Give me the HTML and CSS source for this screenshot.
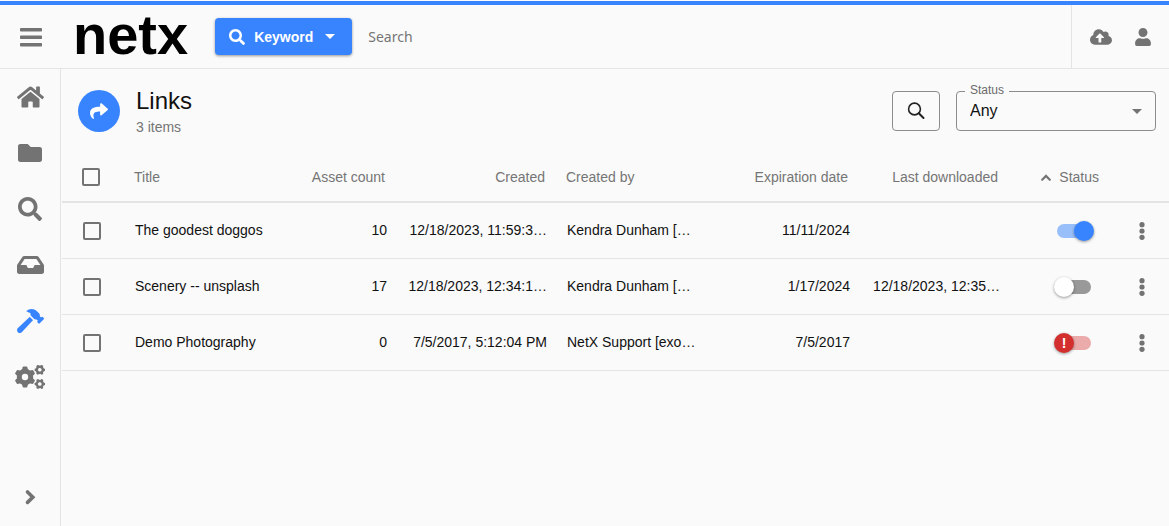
FILE: index.html
```html
<!DOCTYPE html>
<html lang="en">
<head>
  <meta charset="UTF-8">
  <meta name="viewport" content="width=device-width, initial-scale=1.0">
  <title>Links - NetX</title>
  <link rel="stylesheet" href="styles.css">
</head>
<body>
  <!-- Shared icons -->
  <svg class="sprite" aria-hidden="true">
    <symbol id="icon-search" viewBox="0 0 512 512">
      <path d="M505 442.7L405.3 343c-4.5-4.5-10.6-7-17-7H372c27.6-35.3 44-79.7 44-128C416 93.1 322.9 0 208 0S0 93.1 0 208s93.1 208 208 208c48.3 0 92.7-16.4 128-44v16.3c0 6.4 2.5 12.5 7 17l99.7 99.7c9.4 9.4 24.6 9.4 33.9 0l28.3-28.3c9.4-9.4 9.4-24.6.1-34zM208 336c-70.7 0-128-57.2-128-128 0-70.7 57.2-128 128-128 70.7 0 128 57.2 128 128 0 70.7-57.2 128-128 128z"/>
    </symbol>
    <symbol id="icon-more" viewBox="0 0 6 18">
      <circle cx="3" cy="2.7" r="2.6"/>
      <circle cx="3" cy="9" r="2.6"/>
      <circle cx="3" cy="15.3" r="2.6"/>
    </symbol>
    <symbol id="icon-caret" viewBox="0 0 10 5">
      <path d="M0 0h10L5 5z"/>
    </symbol>
  </svg>

  <header class="topbar">
    <button class="icon-button menu-button" type="button" aria-label="Menu">
      <svg width="22" height="20" viewBox="0 0 22 20">
        <rect x="0" y="1" width="22" height="3.5" rx="0.8"/>
        <rect x="0" y="8.5" width="22" height="3.5" rx="0.8"/>
        <rect x="0" y="16" width="22" height="3.5" rx="0.8"/>
      </svg>
    </button>
    <a class="logo" href="#">netx</a>
    <button class="keyword-button" type="button">
      <svg width="16" height="16"><use href="#icon-search"/></svg>
      <span>Keyword</span>
      <svg width="10" height="5"><use href="#icon-caret"/></svg>
    </button>
    <input class="search-input" type="search" placeholder="Search" aria-label="Search">
    <div class="user-tools">
      <button class="icon-button" type="button" aria-label="Upload">
        <svg width="22" height="18" viewBox="0 0 640 512">
          <path d="M537.6 226.6c4.1-10.7 6.4-22.4 6.4-34.6 0-53-43-96-96-96-19.7 0-38.1 6-53.3 16.2C367 64.2 315.3 32 256 32c-88.4 0-160 71.6-160 160 0 2.7.1 5.4.2 8.1C40.2 219.8 0 273.2 0 336c0 79.5 64.5 144 144 144h368c70.7 0 128-57.3 128-128 0-61.9-44-113.6-102.4-125.4zM393.4 288H328v112c0 8.8-7.2 16-16 16h-48c-8.8 0-16-7.2-16-16V288h-65.4c-14.3 0-21.4-17.2-11.3-27.3l105.4-105.4c6.2-6.2 16.4-6.2 22.6 0l105.4 105.4c10.1 10.1 2.9 27.3-11.3 27.3z"/>
        </svg>
      </button>
      <button class="icon-button" type="button" aria-label="Account">
        <svg width="16" height="18" viewBox="0 0 448 512">
          <path d="M224 256c70.7 0 128-57.3 128-128S294.7 0 224 0 96 57.3 96 128s57.3 128 128 128zm89.6 32h-16.7c-22.2 10.2-46.9 16-72.9 16s-50.6-5.8-72.9-16h-16.7C60.2 288 0 348.2 0 422.4V464c0 26.5 21.5 48 48 48h352c26.5 0 48-21.5 48-48v-41.6c0-74.2-60.2-134.4-134.4-134.4z"/>
        </svg>
      </button>
    </div>
  </header>

  <div class="layout">
    <nav class="sidebar" aria-label="Main">
      <a href="#" aria-label="Home">
        <svg width="27" height="24" viewBox="0 0 576 512">
          <path d="M280.37 148.26L96 300.11V464a16 16 0 0 0 16 16l112.06-.29a16 16 0 0 0 15.92-16V368a16 16 0 0 1 16-16h64a16 16 0 0 1 16 16v95.64a16 16 0 0 0 16 16.05L464 480a16 16 0 0 0 16-16V300L295.67 148.26a12.19 12.19 0 0 0-15.3 0zM571.6 251.47L488 182.56V44.05a12 12 0 0 0-12-12h-56a12 12 0 0 0-12 12v72.61L318.47 43a48 48 0 0 0-61 0L4.34 251.47a12 12 0 0 0-1.6 16.9l25.5 31A12 12 0 0 0 45.15 301l235.22-193.74a12.19 12.19 0 0 1 15.3 0L530.9 301a12 12 0 0 0 16.9-1.6l25.5-31a12 12 0 0 0-1.7-16.93z"/>
        </svg>
      </a>
      <a href="#" aria-label="Folders">
        <svg width="24" height="24" viewBox="0 0 512 512">
          <path d="M464 128H272l-64-64H48C21.49 64 0 85.49 0 112v288c0 26.51 21.49 48 48 48h416c26.51 0 48-21.49 48-48V176c0-26.51-21.49-48-48-48z"/>
        </svg>
      </a>
      <a href="#" aria-label="Search">
        <svg width="24" height="24"><use href="#icon-search"/></svg>
      </a>
      <a href="#" aria-label="Inbox">
        <svg width="27" height="24" viewBox="0 0 576 512">
          <path d="M567.938 243.908L462.25 85.374A48.003 48.003 0 0 0 422.311 64H153.689a48 48 0 0 0-39.938 21.374L8.062 243.908A47.994 47.994 0 0 0 0 270.533V400c0 26.51 21.49 48 48 48h480c26.51 0 48-21.49 48-48V270.533a47.994 47.994 0 0 0-8.062-26.625zM162.252 128h251.497l85.333 128H376l-32 64H232l-32-64H76.918l85.334-128z"/>
        </svg>
      </a>
      <a class="active" href="#" aria-label="Tools" aria-current="page">
        <svg width="27" height="24" viewBox="0 0 576 512">
          <path d="M571.31 193.94l-22.63-22.63c-6.25-6.25-16.38-6.25-22.63 0l-11.31 11.31-28.9-28.9c5.63-21.31.36-44.9-16.35-61.61l-45.25-45.25c-62.48-62.48-163.79-62.48-226.28 0l90.51 45.25v18.75c0 16.97 6.74 33.25 18.75 45.25l49.14 49.14c16.71 16.71 40.3 21.98 61.61 16.35l28.9 28.9-11.31 11.31c-6.25 6.25-6.25 16.38 0 22.63l22.63 22.63c6.25 6.25 16.38 6.25 22.63 0l90.51-90.51c6.23-6.24 6.23-16.37-.02-22.62zm-286.72-15.2c-3.7-3.7-6.84-7.79-9.85-11.95L19.64 404.96c-25.57 23.88-26.26 64.19-1.53 88.93s65.05 24.05 88.92-1.53l238.13-255.07c-3.96-2.91-7.9-5.87-11.44-9.41l-49.13-49.14z"/>
        </svg>
      </a>
      <a href="#" aria-label="Settings">
        <svg width="30" height="24" viewBox="0 0 30 24">
          <g transform="translate(10 12)">
            <circle r="5.7" fill="none" stroke="currentColor" stroke-width="5"/>
            <g id="teeth">
              <path id="tooth" d="M-3.2-6.8l.9-3q.2-.6.8-.6h3q.6 0 .8.6l.9 3z"/>
              <use href="#tooth" transform="rotate(60)"/>
              <use href="#tooth" transform="rotate(120)"/>
              <use href="#tooth" transform="rotate(180)"/>
              <use href="#tooth" transform="rotate(240)"/>
              <use href="#tooth" transform="rotate(300)"/>
            </g>
          </g>
          <g transform="translate(24.8 4.8) rotate(30) scale(0.5)">
            <circle r="6" fill="none" stroke="currentColor" stroke-width="4.8"/>
            <use href="#teeth"/>
          </g>
          <g transform="translate(24.8 19) rotate(30) scale(0.5)">
            <circle r="6" fill="none" stroke="currentColor" stroke-width="4.8"/>
            <use href="#teeth"/>
          </g>
        </svg>
      </a>
      <button class="icon-button expand-button" type="button" aria-label="Expand sidebar">
        <svg width="12" height="18" viewBox="0 0 12 18">
          <path d="M3.5 3L8.800 8.200l-5.300 5.200" fill="none" stroke="currentColor" stroke-width="3.6" stroke-linecap="round"/>
        </svg>
      </button>
    </nav>

    <main class="content">
      <div class="page-header">
        <span class="page-icon">
          <svg width="18" height="18" viewBox="0 0 512 512">
            <path d="M503.691 189.836L327.687 37.851C312.281 24.546 288 35.347 288 56.015v80.053C127.371 137.907 0 170.1 0 322.326c0 61.441 39.581 122.309 83.333 154.132 13.653 9.931 33.111-2.533 28.077-18.631C66.066 312.814 132.917 274.316 288 272.085V360c0 20.7 24.3 31.453 39.687 18.164l176.004-152c11.071-9.562 11.086-26.753 0-36.328z"/>
          </svg>
        </span>
        <div class="page-title">
          <h1>Links</h1>
          <p>3 items</p>
        </div>
        <button class="filter-search" type="button" aria-label="Search links">
          <svg width="18" height="18" viewBox="0 0 18 18">
            <circle cx="7.5" cy="7" r="5.9" fill="none" stroke="currentColor" stroke-width="1.6"/>
            <path d="M11.8 11.3l4.7 4.7" fill="none" stroke="currentColor" stroke-width="2" stroke-linecap="round"/>
          </svg>
        </button>
        <div class="select-field">
          <label for="status-filter">Status</label>
          <select id="status-filter">
            <option>Any</option>
            <option>Active</option>
            <option>Inactive</option>
            <option>Expired</option>
          </select>
          <svg width="10" height="5"><use href="#icon-caret"/></svg>
        </div>
      </div>

      <table class="links-table">
        <colgroup>
          <col class="col-check">
          <col>
          <col class="col-count">
          <col class="col-created">
          <col class="col-author">
          <col class="col-date">
          <col class="col-date">
          <col class="col-status">
          <col class="col-menu">
        </colgroup>
        <thead>
          <tr>
            <th class="check"><input type="checkbox" aria-label="Select all"></th>
            <th>Title</th>
            <th class="right">Asset count</th>
            <th class="right">Created</th>
            <th>Created by</th>
            <th class="right">Expiration date</th>
            <th class="right">Last downloaded</th>
            <th class="status" aria-sort="ascending">
              <svg width="10" height="8" viewBox="0 0 10 8">
                <path d="M1.2 5.700L5 1.900l3.8 3.800" fill="none" stroke="currentColor" stroke-width="2.2" stroke-linecap="round"/>
              </svg>
              Status
            </th>
            <th></th>
          </tr>
        </thead>
        <tbody>
          <tr>
            <td class="check"><input type="checkbox" aria-label="Select The goodest doggos"></td>
            <td>The goodest doggos</td>
            <td class="right">10</td>
            <td class="right">12/18/2023, 11:59:3…</td>
            <td>Kendra Dunham […</td>
            <td class="right">11/11/2024</td>
            <td class="right"></td>
            <td class="status"><input class="switch" type="checkbox" role="switch" aria-label="Active" checked></td>
            <td class="menu"><button class="icon-button" type="button" aria-label="More"><svg width="6" height="18"><use href="#icon-more"/></svg></button></td>
          </tr>
          <tr>
            <td class="check"><input type="checkbox" aria-label="Select Scenery -- unsplash"></td>
            <td>Scenery -- unsplash</td>
            <td class="right">17</td>
            <td class="right">12/18/2023, 12:34:1…</td>
            <td>Kendra Dunham […</td>
            <td class="right">1/17/2024</td>
            <td class="right">12/18/2023, 12:35…</td>
            <td class="status"><input class="switch" type="checkbox" role="switch" aria-label="Active"></td>
            <td class="menu"><button class="icon-button" type="button" aria-label="More"><svg width="6" height="18"><use href="#icon-more"/></svg></button></td>
          </tr>
          <tr>
            <td class="check"><input type="checkbox" aria-label="Select Demo Photography"></td>
            <td>Demo Photography</td>
            <td class="right">0</td>
            <td class="right">7/5/2017, 5:12:04 PM</td>
            <td>NetX Support [exo…</td>
            <td class="right">7/5/2017</td>
            <td class="right"></td>
            <td class="status"><input class="switch expired" type="checkbox" role="switch" aria-label="Expired"></td>
            <td class="menu"><button class="icon-button" type="button" aria-label="More"><svg width="6" height="18"><use href="#icon-more"/></svg></button></td>
          </tr>
        </tbody>
      </table>
    </main>
  </div>
</body>
</html>
```

FILE: styles.css
```css
* {
  box-sizing: border-box;
}

body {
  margin: 0;
  min-height: 100vh;
  display: flex;
  flex-direction: column;
  background-color: #fafafa;
  color: #111;
  font-family: "Liberation Sans", Arial, sans-serif;
  font-size: 14px;
}

svg {
  display: block;
  fill: currentColor;
}

button, input, select {
  font-family: inherit;
}

.sprite {
  position: absolute;
  width: 0;
  height: 0;
}

.icon-button {
  display: flex;
  align-items: center;
  justify-content: center;
  padding: 0;
  border: none;
  background: none;
  color: #737373;
  cursor: pointer;
}

/* Top bar */
.topbar {
  display: flex;
  align-items: center;
  height: 68px;
  margin-top: 1px;
  border-top: 4px solid #3884ff;
  border-bottom: 1px solid #e4e4e4;
}

.menu-button {
  width: 62px;
  height: 40px;
}

.logo {
  margin-left: 11px;
  padding-bottom: 4px;
  color: #000;
  font-size: 56px;
  font-weight: bold;
  line-height: 56px;
  text-decoration: none;
}

.keyword-button {
  display: flex;
  align-items: center;
  height: 37px;
  margin-left: 27px;
  padding: 0 17px 0 14px;
  border: none;
  border-radius: 4px;
  background-color: #3884ff;
  box-shadow: 0 1px 3px rgba(0, 0, 0, 0.4);
  color: #fff;
  font-size: 14px;
  font-weight: bold;
  cursor: pointer;
}

.keyword-button span {
  margin: 0 12px 0 9px;
}

.search-input {
  flex: 1;
  min-width: 0;
  padding: 0 16px;
  border: none;
  outline: none;
  background: none;
  color: #111;
  font-family: "Noto Sans", sans-serif;
  font-size: 14px;
}

.search-input::placeholder {
  color: #757575;
}

.user-tools {
  display: flex;
  align-self: stretch;
  align-items: center;
  gap: 23px;
  padding: 0 18px;
  border-left: 1px solid #e4e4e4;
}

/* Sidebar */
.layout {
  display: flex;
  flex: 1;
}

.sidebar {
  display: flex;
  flex-direction: column;
  width: 61px;
  flex-shrink: 0;
  border-right: 1px solid #e4e4e4;
}

.sidebar a,
.expand-button {
  display: flex;
  align-items: center;
  justify-content: center;
  height: 56px;
  color: #737373;
}

.sidebar a.active {
  color: #3884ff;
}

.sidebar .expand-button {
  margin-top: auto;
}

/* Page header */
.content {
  flex: 1;
  min-width: 0;
  padding-left: 1px;
}

.page-header {
  display: flex;
  align-items: center;
  gap: 16px;
  padding: 16px 13px 16px 16px;
}

.page-icon {
  display: flex;
  align-items: center;
  justify-content: center;
  width: 42px;
  height: 42px;
  border-radius: 50%;
  background-color: #3884ff;
  color: #fff;
}

.page-title {
  flex: 1;
}

.page-title h1 {
  margin: 0;
  font-size: 24px;
  font-weight: normal;
  line-height: 32px;
}

.page-title p {
  margin: 0;
  color: #757575;
  line-height: 20px;
}

.filter-search {
  display: flex;
  align-items: center;
  justify-content: center;
  width: 48px;
  height: 40px;
  padding: 0;
  border: 1px solid #8c8c8c;
  border-radius: 4px;
  background: none;
  color: #222;
  cursor: pointer;
}

.select-field {
  position: relative;
  width: 200px;
}

.select-field select {
  display: block;
  width: 100%;
  height: 40px;
  padding: 0 32px 2px 13px;
  border: 1px solid #8c8c8c;
  border-radius: 4px;
  appearance: none;
  background: none;
  color: #111;
  font-size: 16px;
}

/* Label sits on the top border of the select */
.select-field label {
  position: absolute;
  top: -8px;
  left: 9px;
  padding: 0 5px;
  background-color: #fafafa;
  color: #6b6b6b;
  font-size: 12px;
  line-height: 14px;
}

.select-field svg {
  position: absolute;
  top: 18px;
  right: 14px;
  color: #737373;
  pointer-events: none;
}

/* Table */
.links-table {
  width: 100%;
  table-layout: fixed;
  border-collapse: separate;
  border-spacing: 0;
}

.col-check { width: 63px; }
.col-count { width: 100px; }
.col-created { width: 160px; }
.col-author { width: 153px; }
.col-date { width: 150px; }
.col-status { width: 105px; }
.col-menu { width: 54px; }

.links-table th {
  height: 50px;
  padding: 0 12px 0 9px;
  border-bottom: 2px solid #e4e4e4;
  color: #757575;
  font-weight: normal;
  text-align: left;
}

.links-table td {
  height: 56px;
  padding: 0 10px 2px;
  border-bottom: 1px solid #e4e4e4;
  overflow: hidden;
  white-space: nowrap;
  text-overflow: ellipsis;
}

.links-table .right {
  text-align: right;
}

.links-table .check {
  padding: 0 0 0 20px;
}

.links-table td.check {
  padding-left: 21px;
}

.links-table .status {
  padding: 0 16px 0 0;
  text-align: right;
}

.links-table td.status {
  padding-right: 21px;
}

.links-table .menu {
  padding: 0 10px;
}

.status svg {
  display: inline-block;
  margin-right: 4px;
}

.check input {
  display: block;
  width: 18px;
  height: 18px;
  margin: 0;
  border: 2px solid #737373;
  border-radius: 2px;
  appearance: none;
}

.check input:checked {
  border-color: #3884ff;
  background-color: #3884ff;
}

.menu .icon-button {
  width: 100%;
  height: 40px;
}

/* Toggle switch */
.switch {
  display: inline-flex;
  align-items: center;
  width: 40px;
  height: 24px;
  margin: 0;
  padding: 0 3px;
  appearance: none;
  vertical-align: middle;
  cursor: pointer;
}

.switch::before {
  content: "";
  width: 34px;
  height: 14px;
  flex-shrink: 0;
  border-radius: 7px;
  background-color: #999;
}

.switch::after {
  content: "";
  width: 20px;
  height: 20px;
  flex-shrink: 0;
  margin-left: -37px;
  border-radius: 50%;
  background-color: #fff;
  box-shadow: 0 1px 3px rgba(0, 0, 0, 0.4);
  color: #fff;
  font-size: 14px;
  font-weight: bold;
  line-height: 20px;
  text-align: center;
}

.switch:checked::before {
  background-color: #98bffa;
}

.switch:checked::after {
  margin-left: -17px;
  background-color: #3884ff;
}

.switch.expired::before {
  background-color: #ecabab;
}

.switch.expired::after {
  content: "!";
  background-color: #d32f2f;
}
```
